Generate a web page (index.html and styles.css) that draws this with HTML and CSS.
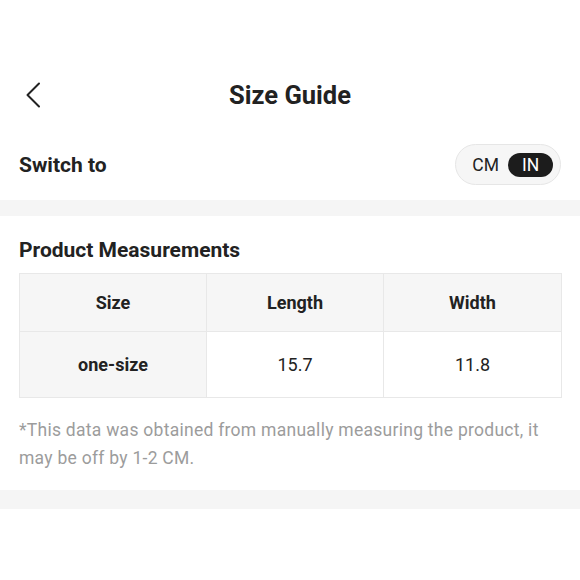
FILE: index.html
```html
<!DOCTYPE html>
<html lang="en">
<head>
<meta charset="utf-8">
<title>Size Guide</title>
<link rel="stylesheet" href="styles.css">
</head>
<body>
<div class="page">
  <header class="topbar">
    <button class="back" aria-label="Back">
      <svg width="16" height="26" viewBox="0 0 16 26"><path d="M14 1.5 L2.5 13 L14 24.5" fill="none" stroke="#222" stroke-width="2" stroke-linecap="round" stroke-linejoin="round"/></svg>
    </button>
    <h1 class="title">Size Guide</h1>
  </header>

  <div class="switch-row">
    <span class="switch-label">Switch to</span>
    <div class="toggle">
      <span class="opt">CM</span>
      <span class="opt active">IN</span>
    </div>
  </div>

  <div class="divider"></div>

  <section class="measure">
    <h2 class="section-title">Product Measurements</h2>
    <table class="size-table">
      <colgroup>
        <col class="c1"><col class="c2"><col class="c3">
      </colgroup>
      <thead>
        <tr><th>Size</th><th>Length</th><th>Width</th></tr>
      </thead>
      <tbody>
        <tr><th class="rowhead">one-size</th><td>15.7</td><td>11.8</td></tr>
      </tbody>
    </table>
    <p class="note">*This data was obtained from manually measuring the product, it may be off by 1-2 CM.</p>
  </section>

  <div class="divider bottom"></div>
</div>
</body>
</html>
```

FILE: styles.css
```css
* { box-sizing: border-box; }
html, body { margin: 0; padding: 0; background: #fff; }
body {
  font-family: Roboto, "Noto Sans", "Liberation Sans", sans-serif;
  color: #222;
  width: 580px;
}
.page { padding-top: 67px; }

.topbar {
  position: relative;
  height: 56px;
  display: flex;
  align-items: center;
  justify-content: center;
}
.back {
  position: absolute;
  left: 25px;
  top: 15px;
  width: 18px;
  height: 26px;
  padding: 0;
  border: 0;
  background: none;
  display: flex;
}
.title {
  margin: 0;
  font-size: 25.5px;
  font-weight: 700;
  line-height: 30px;
  color: #222;
}

.switch-row {
  display: flex;
  align-items: center;
  justify-content: space-between;
  padding: 21px 19px 15px 19px;
}
.switch-label {
  font-size: 21px;
  font-weight: 700;
}
.toggle {
  display: flex;
  align-items: center;
  gap: 9px;
  height: 41px;
  padding: 0 7px 0 16px;
  border: 1px solid #e6e6e6;
  border-radius: 21px;
  background: #f6f6f6;
}
.opt {
  font-size: 17.5px;
  color: #222;
  line-height: 24px;
}
.opt.active {
  background: #1c1c1c;
  color: #fff;
  border-radius: 12px;
  width: 45px;
  height: 24px;
  text-align: center;
}

.divider { height: 16px; background: #f5f5f5; }
.divider.bottom { height: 19px; }

.measure { padding: 22px 19px 18px 19px; }
.section-title {
  margin: 0 0 11px 0;
  font-size: 21px;
  font-weight: 700;
  line-height: 24px;
}
.size-table {
  width: 542px;
  border-collapse: collapse;
  table-layout: fixed;
  font-size: 18px;
}
.size-table col.c1 { width: 187px; }
.size-table col.c2 { width: 177px; }
.size-table col.c3 { width: 178px; }
.size-table th, .size-table td {
  border: 1px solid #e8e8e8;
  text-align: center;
  padding: 0;
}
.size-table thead th {
  height: 58px;
  background: #f6f6f6;
  font-weight: 700;
}
.size-table tbody th, .size-table tbody td { height: 66px; }
.size-table .rowhead { background: #f6f6f6; font-weight: 700; }
.size-table td { font-weight: 400; }

.note {
  margin: 18px 0 0 0;
  font-size: 17.5px;
  letter-spacing: 0.27px;
  line-height: 28px;
  color: #9c9c9c;
}
```
